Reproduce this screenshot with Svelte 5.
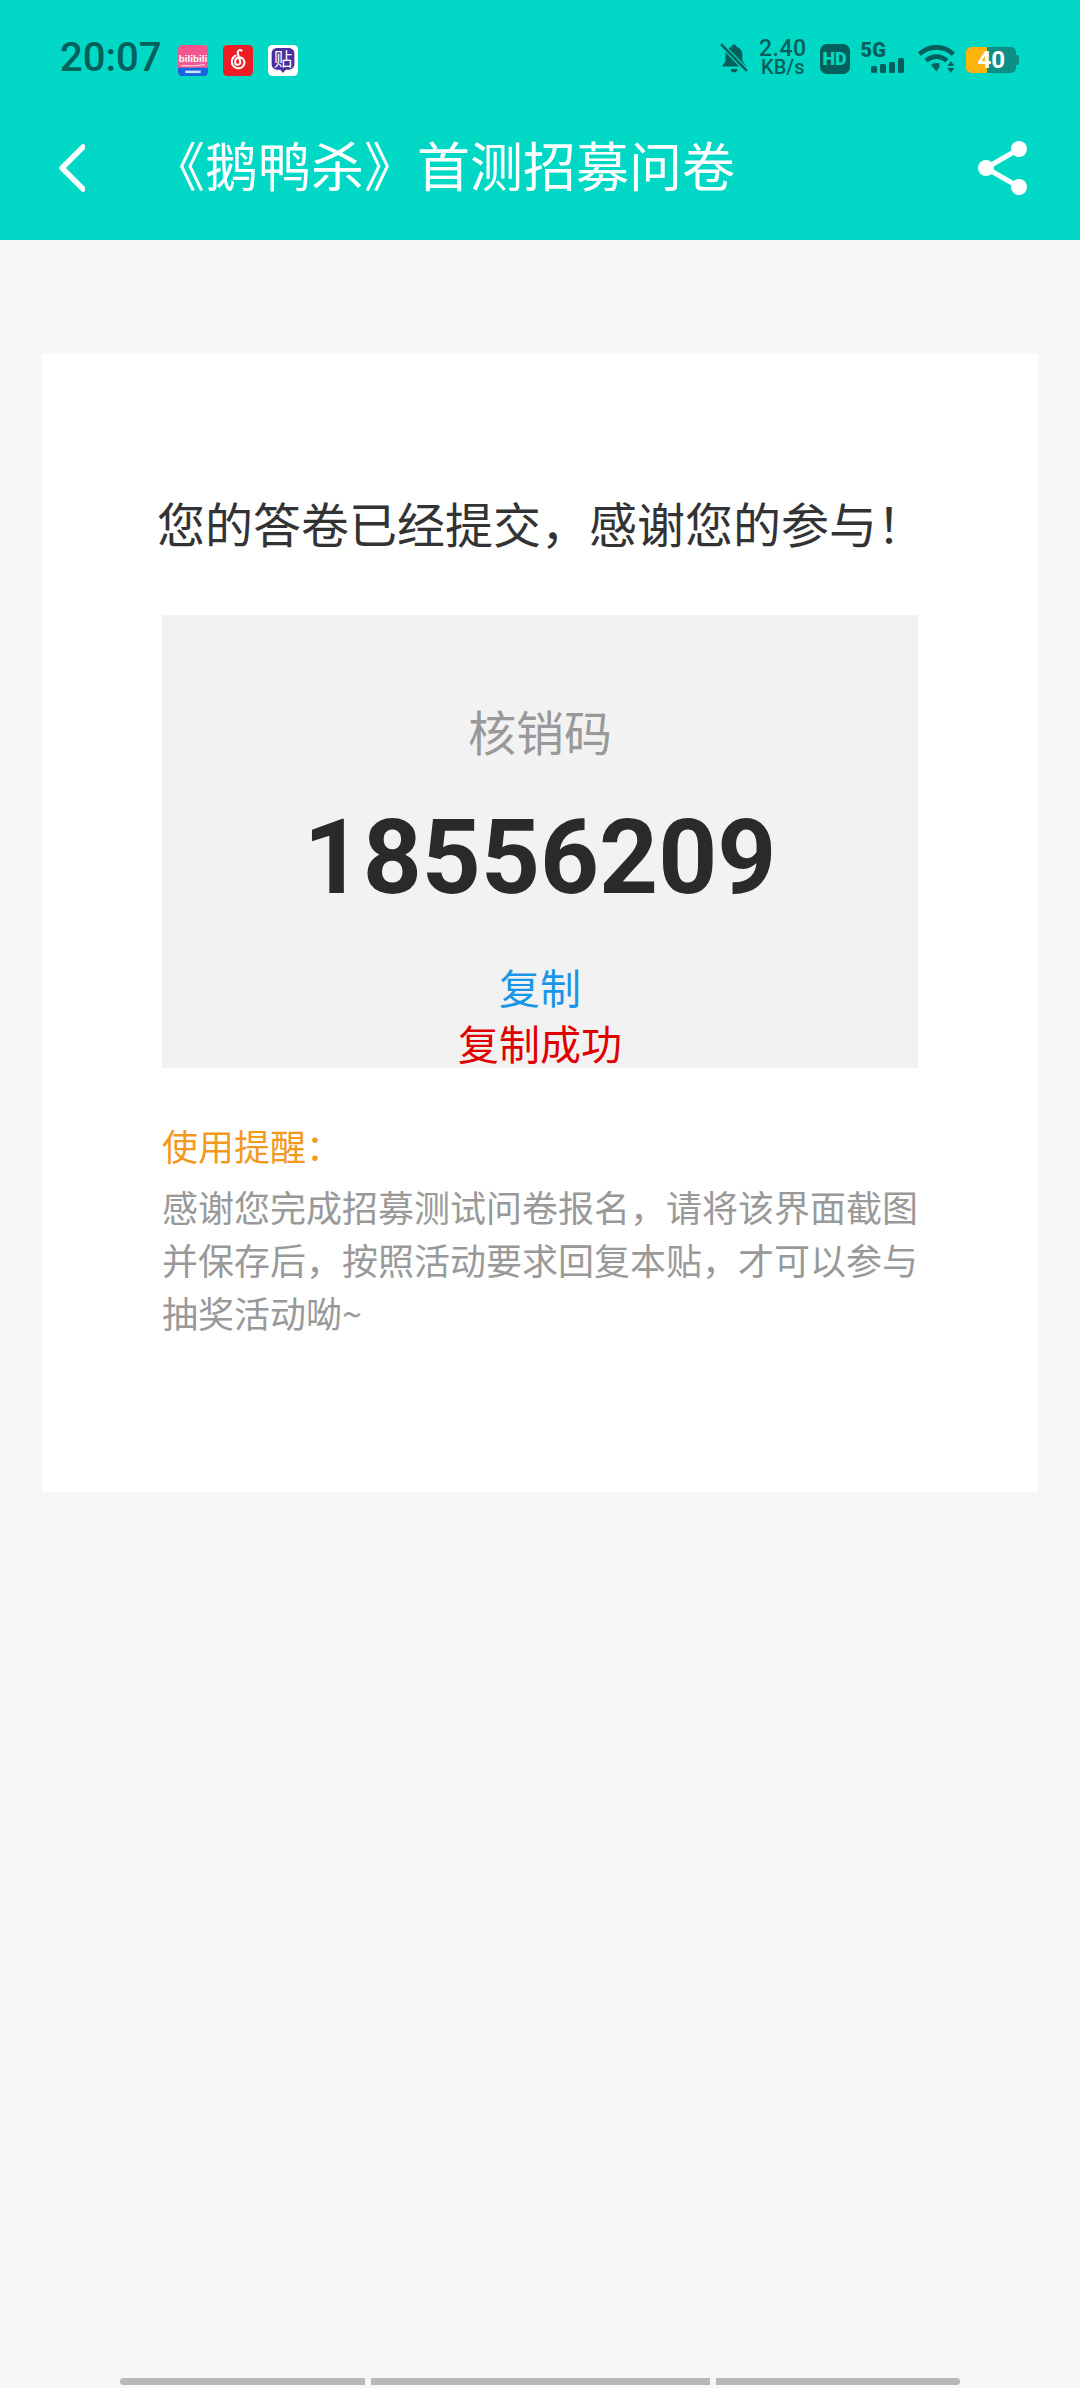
<script>
  const code = '18556209';
  const notice = '感谢您完成招募测试问卷报名，请将该界面截图并保存后，按照活动要求回复本贴，才可以参与抽奖活动呦~';
</script>

<div class="page">
  <header class="top">
    <div class="status">
      <span class="time">20:07</span>
      <div class="apps">
        <svg width="30" height="31" viewBox="0 0 29 30">
          <defs>
            <linearGradient id="pink" x1="0" y1="0" x2="0" y2="1">
              <stop offset="0" stop-color="#f4548c" />
              <stop offset="1" stop-color="#f0609c" />
            </linearGradient>
          </defs>
          <rect width="29" height="30" rx="4" fill="url(#pink)" />
          <path d="M0 22h29v4a4 4 0 0 1-4 4H4a4 4 0 0 1-4-4z" fill="#1266e0" />
          <text x="14.500" y="16.500" class="bili">bilibili</text>
          <path d="M3 20q12 1 23-1" stroke="#fff" stroke-width=".8" fill="none" />
          <rect x="7" y="24.800" width="15" height="2.400" fill="#cfe0fb" />
        </svg>
        <svg width="30" height="31" viewBox="0 0 29 30">
          <rect width="29" height="30" rx="4" fill="#ee1c24" />
          <path d="M18 5.500c-2-1.500-4.500.2-3.600 2.800l2.300 8.200c.6 3-4.500 3.800-5 .5-.4-3 2-5.300 4.500-5 3 .3 5 2.700 4.500 5.700-.5 3.300-3.500 5.300-6.800 4.800-3.500-.5-5.800-3.800-5.300-7.200.3-2.200 1.700-4 3.600-5" fill="none" stroke="#fff" stroke-width="2" stroke-linecap="round" />
        </svg>
        <svg width="30" height="31" viewBox="0 0 29 30">
          <rect width="29" height="30" rx="4" fill="#fff" />
          <path d="M9 3h11c3.300 0 5.500 2.200 5.500 5.500v10c0 3.300-2.200 5.500-5.500 5.500h-3l-2.500 3-2.500-3H9c-3.300 0-5.500-2.200-5.500-5.500v-10C3.500 5.200 5.700 3 9 3z" fill="#4a2fa0" />
          <text x="14.500" y="20" class="tie">贴</text>
        </svg>
      </div>
      <div class="indicators">
        <svg class="bell" width="28" height="30" viewBox="0 0 28 30">
          <path d="M14 1.500c1.500 0 2.500 1 2.500 2.200 3.800 1 6 4.200 6 8v6l3 4.300v1.500H2.500V22.500l3-4.300v-6.500c0-3.800 2.200-7 6-8C11.500 2.500 12.500 1.500 14 1.500zM10.500 26h7c0 2-1.500 3.500-3.500 3.500S10.500 28 10.500 26z" fill="#05605c" />
          <path d="M1.500 1.500 27 28" stroke="#00d8c6" stroke-width="5" />
          <path d="M1 1 27 28" stroke="#05605c" stroke-width="2.600" />
        </svg>
        <div class="speed">
          <span class="num">2.40</span>
          <span class="unit">KB/s</span>
        </div>
        <div class="hd">HD</div>
        <div class="signal">
          <span class="g5">5G</span>
          <div class="bars">
            <i style="height:7px"></i><i style="height:9px"></i><i style="height:11px"></i><i style="height:15px"></i>
          </div>
        </div>
        <svg class="wifi" width="38" height="30" viewBox="0 0 38 30">
          <path d="M0 8.500C5 3.500 11.500 1 18.500 1s13.500 2.500 18.500 7.500l-3 3.500c-4.200-4-9.500-6.200-15.500-6.200S7.200 8 3 12z" fill="#05605c" />
          <path d="M6.500 15c3.300-3.200 7.500-4.800 12-4.800s8.700 1.600 12 4.800l-3.200 3.400c-2.400-2.200-5.500-3.500-8.800-3.500s-6.400 1.300-8.800 3.500z" fill="#05605c" />
          <path d="M13 21c1.500-1.300 3.400-2 5.500-2s3 .5 3 .5v3.500l-3 4.500z" fill="#05605c" />
          <path d="M33 17l3.500 5h-7zM29.500 24h7L33 29z" fill="#05605c" />
        </svg>
        <div class="battery">
          <div class="cell"><div class="level"></div></div>
          <span class="pct">40</span>
          <i class="cap"></i>
        </div>
      </div>
    </div>
    <nav class="bar">
      <svg class="back" width="26" height="48" viewBox="0 0 26 48">
        <path d="M24 3 3 24l21 21" fill="none" stroke="#fff" stroke-width="5.500" stroke-linecap="round" stroke-linejoin="round" />
      </svg>
      <h1>《鹅鸭杀》首测招募问卷</h1>
      <svg class="share" width="50" height="54" viewBox="0 0 50 54">
        <path d="M41 8 8 27l33 19" fill="none" stroke="#fff" stroke-width="5" />
        <circle cx="41" cy="8" r="8" fill="#fff" />
        <circle cx="8" cy="27" r="8" fill="#fff" />
        <circle cx="41" cy="46" r="8" fill="#fff" />
      </svg>
    </nav>
  </header>

  <main class="card">
    <h2>您的答卷已经提交，感谢您的参与！</h2>
    <section class="codebox">
      <div class="label">核销码</div>
      <div class="code">{code}</div>
      <div class="copy">复制</div>
      <div class="copied">复制成功</div>
    </section>
    <div class="tip">使用提醒：</div>
    <p class="notice">{notice}</p>
  </main>

  <div class="gesture">
    <i style="width:245px"></i><i style="width:339px"></i><i style="width:244px"></i>
  </div>
</div>

<style>
:global(body) {
  margin: 0;
  background: #f7f7f7;
}
.page {
  width: 1080px;
  height: 2388px;
  display: flex;
  flex-direction: column;
  font-family: "Noto Sans CJK SC", "Noto Sans", sans-serif;
  background: #f7f7f7;
}
.top {
  background: #00d8c6;
  height: 240px;
  flex: none;
}
.status {
  height: 96px;
  box-sizing: border-box;
  padding: 40px 0 0 60px;
  display: flex;
  align-items: flex-start;
  color: #05605c;
}
.time {
  font-family: Roboto, sans-serif;
  font-size: 40px;
  font-weight: 500;
  line-height: 36px;
  width: 118px;
}
.apps {
  display: flex;
  gap: 15px;
  padding-top: 5px;
}
.bili {
  font-family: "Liberation Sans", sans-serif;
  font-size: 9.500px;
  font-weight: 700;
  fill: #fff;
  text-anchor: middle;
}
.tie {
  font-size: 18px;
  fill: #fff;
  text-anchor: middle;
}
.indicators {
  margin-left: auto;
  display: flex;
  width: 300px;
  margin-right: 60px;
  height: 36px;
  align-items: flex-start;
}
.bell {
  margin-top: 3px;
  margin-right: 11px;
}
.speed {
  width: 48px;
  display: flex;
  flex-direction: column;
  align-items: center;
  font-family: Roboto, sans-serif;
  font-weight: 500;
  margin-right: 13px;
}
.num {
  font-size: 23px;
  line-height: 18px;
  letter-spacing: 0.5px;
}
.unit {
  font-size: 20px;
  line-height: 17px;
  margin-top: 1px;
}
.hd {
  width: 30px;
  height: 30px;
  margin-top: 4px;
  background: #05605c;
  border-radius: 7px;
  color: #00d8c6;
  font-family: Roboto, sans-serif;
  font-size: 18px;
  font-weight: 900;
  line-height: 30px;
  text-align: center;
  margin-right: 11px;
}
.signal {
  width: 45px;
  margin-right: 13px;
  margin-top: 3px;
}
.g5 {
  display: block;
  font-family: Roboto, sans-serif;
  font-size: 20px;
  font-weight: 900;
  line-height: 15px;
}
.bars {
  display: flex;
  align-items: flex-end;
  gap: 3px;
  height: 15px;
  margin-left: 10px;
}
.bars i {
  width: 6px;
  background: #05605c;
  border-radius: 1.500px;
}
.wifi {
  margin-top: 4px;
  margin-right: 10px;
}
.battery {
  position: relative;
  width: 54px;
  height: 26px;
  margin-top: 7px;
}
.cell {
  width: 50px;
  height: 26px;
  background: #0e8f85;
  border-radius: 5px;
  overflow: hidden;
}
.level {
  width: 21px;
  height: 100%;
  background: #fcb30e;
}
.cap {
  position: absolute;
  left: 50px;
  top: 8px;
  width: 3px;
  height: 10px;
  background: #0e8f85;
  border-radius: 0 2px 2px 0;
}
.pct {
  position: absolute;
  left: 9px;
  top: 0;
  width: 32px;
  text-align: center;
  font-family: Roboto, sans-serif;
  font-size: 24px;
  font-weight: 700;
  line-height: 26px;
  color: #fff;
}
.bar {
  height: 144px;
  display: flex;
  align-items: center;
  padding-left: 59px;
  color: #fff;
}
h1 {
  margin: 0 0 8px 67px;
  font-size: 53px;
  font-weight: 400;
  line-height: 72px;
  white-space: nowrap;
}
.share {
  margin-left: auto;
  margin-right: 52px;
}
.card {
  margin: 114px 42px 0;
  height: 1138px;
  box-sizing: border-box;
  background: #fff;
  padding: 134px 120px 0;
}
h2 {
  margin: 0 -8px 0 -5px;
  font-size: 48px;
  font-weight: 400;
  line-height: 68px;
  color: #333;
  white-space: nowrap;
}
.codebox {
  margin-top: 59px;
  height: 453px;
  background: #f2f2f2;
  box-sizing: border-box;
  padding-top: 81px;
  text-align: center;
}
.label {
  font-size: 48px;
  line-height: 68px;
  color: #999;
}
.code {
  margin-top: 34px;
  font-family: Roboto, sans-serif;
  font-size: 103px;
  font-weight: 700;
  line-height: 120px;
  color: #2a2a2a;
}
.copy {
  margin-top: 40px;
  font-size: 41px;
  line-height: 56px;
  color: #1a96e8;
}
.copied {
  font-size: 41px;
  line-height: 56px;
  color: #e00000;
}
.tip {
  margin-top: 52px;
  font-size: 36px;
  line-height: 50px;
  color: #f39a1e;
}
.notice {
  margin: 10px 0 0;
  font-size: 36px;
  line-height: 53px;
  color: #999;
}
.gesture {
  margin-top: auto;
  margin-bottom: 3px;
  height: 7px;
  display: flex;
  justify-content: center;
  gap: 6px;
}
.gesture i {
  background: #b8b8b8;
}
.gesture i:first-child {
  border-radius: 4px 0 0 4px;
}
.gesture i:last-child {
  border-radius: 0 4px 4px 0;
}
</style>
